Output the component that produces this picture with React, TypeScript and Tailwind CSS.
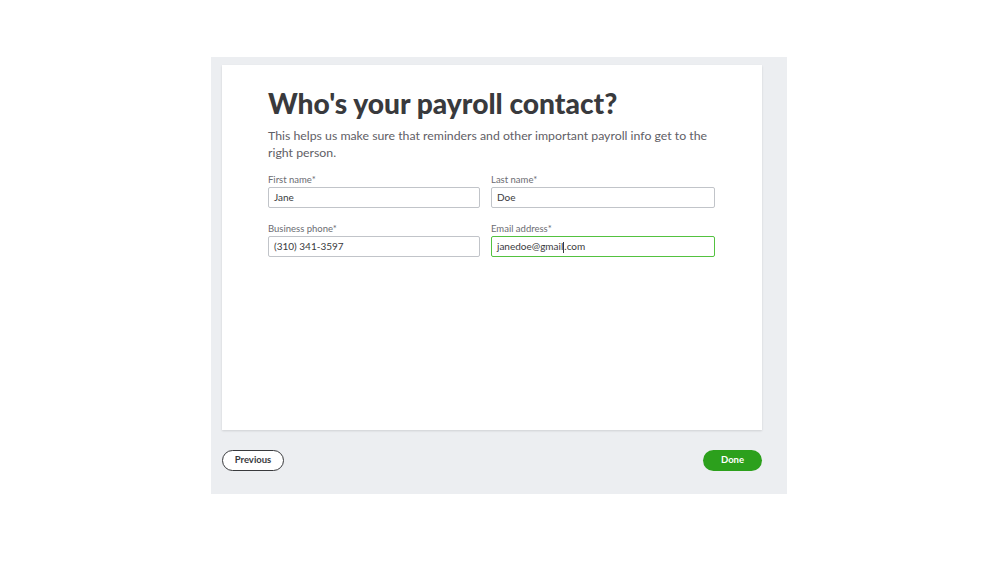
import React from 'react'

const font = { fontFamily: 'Lato, "Noto Sans", sans-serif' }

function Field({ label, value, width, focused = false, caret }: { label: string; value: string; width: string; focused?: boolean; caret?: number }) {
  return (
    <div className={`flex flex-col ${width}`}>
      <label className="text-[9.5px] leading-[12px] text-[#6b6c72] mb-[1px]">{label}</label>
      <div
        className={`h-[21px] flex items-center px-[5px] rounded-[2px] text-[10px] text-[#393a3d] bg-white ${
          focused ? 'border-[1.5px] border-[#53c240]' : 'border border-[#c1c4c9]'
        }`}
      >
        {caret !== undefined ? (
          <span>
            {value.slice(0, caret)}
            <span className="inline-block w-px h-[11px] bg-[#393a3d] align-middle" />
            {value.slice(caret)}
          </span>
        ) : (
          value
        )}
      </div>
    </div>
  )
}

export default function App() {
  return (
    <div className="w-[999px] h-[562px] bg-white pt-[57px] pl-[211px]" style={font}>
      <div className="w-[576px] h-[437px] bg-[#eceef1] pt-[8px] pl-[11px]">
        <div className="w-[540px] h-[365px] bg-white shadow-[0_1px_2px_rgba(0,0,0,0.12)] pl-[46px] pt-[19px]">
          <h1 className="text-[28.2px] leading-[38px] font-black text-[#393a3d]">
            Who's your payroll contact?
          </h1>
          <p className="mt-[5px] w-[450px] text-[12.3px] leading-[17px] text-[#5f6066]">
            This helps us make sure that reminders and other important payroll info get to the right person.
          </p>
          <div className="mt-[13px] flex gap-[11px]">
            <Field label="First name*" value="Jane" width="w-[212px]" />
            <Field label="Last name*" value="Doe" width="w-[224px]" />
          </div>
          <div className="mt-[15px] flex gap-[11px]">
            <Field label="Business phone*" value="(310) 341-3597" width="w-[212px]" />
            <Field label="Email address*" value="janedoe@gmail.com" width="w-[224px]" focused caret={13} />
          </div>
        </div>
        <div className="w-[540px] mt-[20px] flex justify-between">
          <button className="h-[21px] w-[62px] rounded-full border-[1.5px] border-[#393a3d] text-[9.5px] font-bold text-[#393a3d] bg-white">
            Previous
          </button>
          <button className="h-[21px] w-[59px] rounded-full bg-[#2ca01c] text-[9.5px] font-bold text-white">
            Done
          </button>
        </div>
      </div>
    </div>
  )
}
